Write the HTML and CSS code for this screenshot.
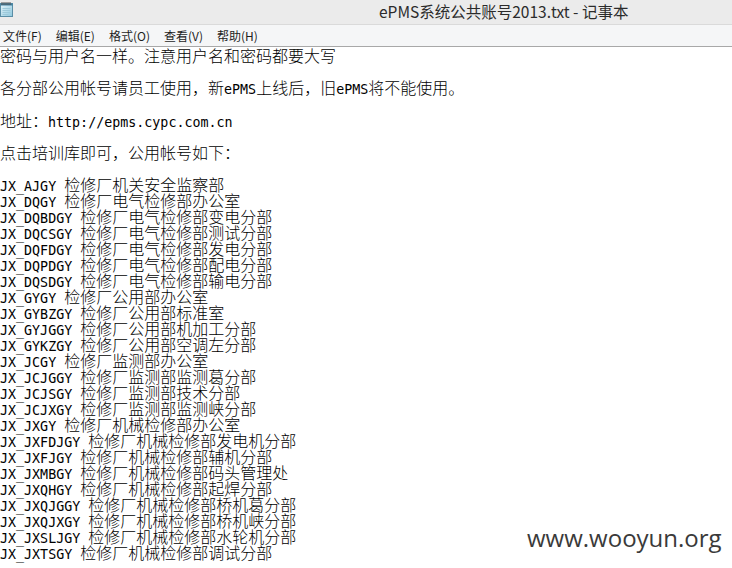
FILE: index.html
```html
<!DOCTYPE html>
<html lang="zh-CN">
<head>
<meta charset="utf-8">
<title>ePMS系统公共账号2013.txt - 记事本</title>
<link rel="stylesheet" href="styles.css">
</head>
<body>
<div class="window">
  <div class="titlebar">
    <svg class="app-icon" width="14" height="16" viewBox="0 0 14 16">
      <defs>
        <linearGradient id="pg" x1="0" y1="0" x2="1" y2="1">
          <stop offset="0" stop-color="#e9f6fb"/>
          <stop offset="1" stop-color="#8cc7dd"/>
        </linearGradient>
      </defs>
      <rect x="0.5" y="2.5" width="12" height="13" fill="url(#pg)" stroke="#5a8ea6"/>
      <rect x="0.5" y="2.5" width="12" height="2" fill="#3f7fa0"/>
      <path d="M2 1v3M4 1v3M6 1v3M8 1v3M10 1v3" stroke="#555" stroke-width="1"/>
      <path d="M2.5 7.5h8M2.5 9.5h8M2.5 11.5h8M2.5 13.5h6" stroke="#9cc9da" stroke-width="1"/>
    </svg>
    <div class="title">ePMS系统公共账号2013.txt - 记事本</div>
  </div>
  <div class="menubar">
    <span class="menu-item">文件(F)</span>
    <span class="menu-item">编辑(E)</span>
    <span class="menu-item">格式(O)</span>
    <span class="menu-item">查看(V)</span>
    <span class="menu-item">帮助(H)</span>
  </div>
  <div class="editor">
    <p class="para">密码与用户名一样。注意用户名和密码都要大写</p>
    <p class="para">各分部公用帐号请员工使用，新<span class="en">ePMS</span>上线后，旧<span class="en">ePMS</span>将不能使用。</p>
    <p class="para">地址：<span class="en">http://epms.cypc.com.cn</span></p>
    <p class="para">点击培训库即可，公用帐号如下：</p>
    <div class="list">
      <div class="row"><span class="en">JX_AJGY </span>检修厂机关安全监察部</div>
      <div class="row"><span class="en">JX_DQGY </span>检修厂电气检修部办公室</div>
      <div class="row"><span class="en">JX_DQBDGY </span>检修厂电气检修部变电分部</div>
      <div class="row"><span class="en">JX_DQCSGY </span>检修厂电气检修部测试分部</div>
      <div class="row"><span class="en">JX_DQFDGY </span>检修厂电气检修部发电分部</div>
      <div class="row"><span class="en">JX_DQPDGY </span>检修厂电气检修部配电分部</div>
      <div class="row"><span class="en">JX_DQSDGY </span>检修厂电气检修部输电分部</div>
      <div class="row"><span class="en">JX_GYGY </span>检修厂公用部办公室</div>
      <div class="row"><span class="en">JX_GYBZGY </span>检修厂公用部标准室</div>
      <div class="row"><span class="en">JX_GYJGGY </span>检修厂公用部机加工分部</div>
      <div class="row"><span class="en">JX_GYKZGY </span>检修厂公用部空调左分部</div>
      <div class="row"><span class="en">JX_JCGY </span>检修厂监测部办公室</div>
      <div class="row"><span class="en">JX_JCJGGY </span>检修厂监测部监测葛分部</div>
      <div class="row"><span class="en">JX_JCJSGY </span>检修厂监测部技术分部</div>
      <div class="row"><span class="en">JX_JCJXGY </span>检修厂监测部监测峡分部</div>
      <div class="row"><span class="en">JX_JXGY </span>检修厂机械检修部办公室</div>
      <div class="row"><span class="en">JX_JXFDJGY </span>检修厂机械检修部发电机分部</div>
      <div class="row"><span class="en">JX_JXFJGY </span>检修厂机械检修部辅机分部</div>
      <div class="row"><span class="en">JX_JXMBGY </span>检修厂机械检修部码头管理处</div>
      <div class="row"><span class="en">JX_JXQHGY </span>检修厂机械检修部起焊分部</div>
      <div class="row"><span class="en">JX_JXQJGGY </span>检修厂机械检修部桥机葛分部</div>
      <div class="row"><span class="en">JX_JXQJXGY </span>检修厂机械检修部桥机峡分部</div>
      <div class="row"><span class="en">JX_JXSLJGY </span>检修厂机械检修部水轮机分部</div>
      <div class="row"><span class="en">JX_JXTSGY </span>检修厂机械检修部调试分部</div>
    </div>
  </div>
  <div class="watermark">www.wooyun.org</div>
</div>
</body>
</html>
```

FILE: styles.css
```css
html, body {
  margin: 0;
  padding: 0;
  background: #ffffff;
}

.window {
  position: relative;
  width: 732px;
  height: 568px;
  overflow: hidden;
  background: #ffffff;
}

.titlebar {
  height: 25px;
  background: #ebebeb;
  border-bottom: 1px solid #dadada;
  box-sizing: border-box;
  display: flex;
  align-items: flex-start;
}

.app-icon {
  margin-top: 1px;
  flex: none;
}

.title {
  margin-left: 365px;
  font-family: "Noto Sans CJK SC", "Open Sans", sans-serif;
  font-size: 15.5px;
  line-height: 22px;
  color: #2b2b2b;
  white-space: nowrap;
}

.menubar {
  height: 21px;
  background: #f5f6f7;
  border-bottom: 1px solid #a8a8a8;
  display: flex;
  align-items: center;
  padding-left: 3px;
  gap: 14px;
}

.menu-item {
  font-family: "Noto Sans CJK SC", sans-serif;
  font-size: 12px;
  line-height: 20px;
  color: #1e1e1e;
  white-space: nowrap;
}

.editor {
  padding: 0;
  font-family: "Noto Sans CJK SC", sans-serif;
  font-weight: 300;
  font-size: 16px;
  line-height: 16px;
  color: #000000;
}

.para {
  margin: 0 0 16.25px 0;
  height: 16px;
  white-space: nowrap;
}

.list {
  display: flex;
  flex-direction: column;
}

.row {
  height: 16px;
  white-space: pre;
}

.en {
  font-family: "DejaVu Sans Mono", "Liberation Mono", monospace;
  font-weight: 400;
  font-size: 13.33px;
  white-space: pre;
}

.watermark {
  position: absolute;
  left: 527px;
  top: 526px;
  font-family: "Open Sans", sans-serif;
  font-size: 24px;
  line-height: 24px;
  color: #3a3a3a;
  white-space: nowrap;
}
```
